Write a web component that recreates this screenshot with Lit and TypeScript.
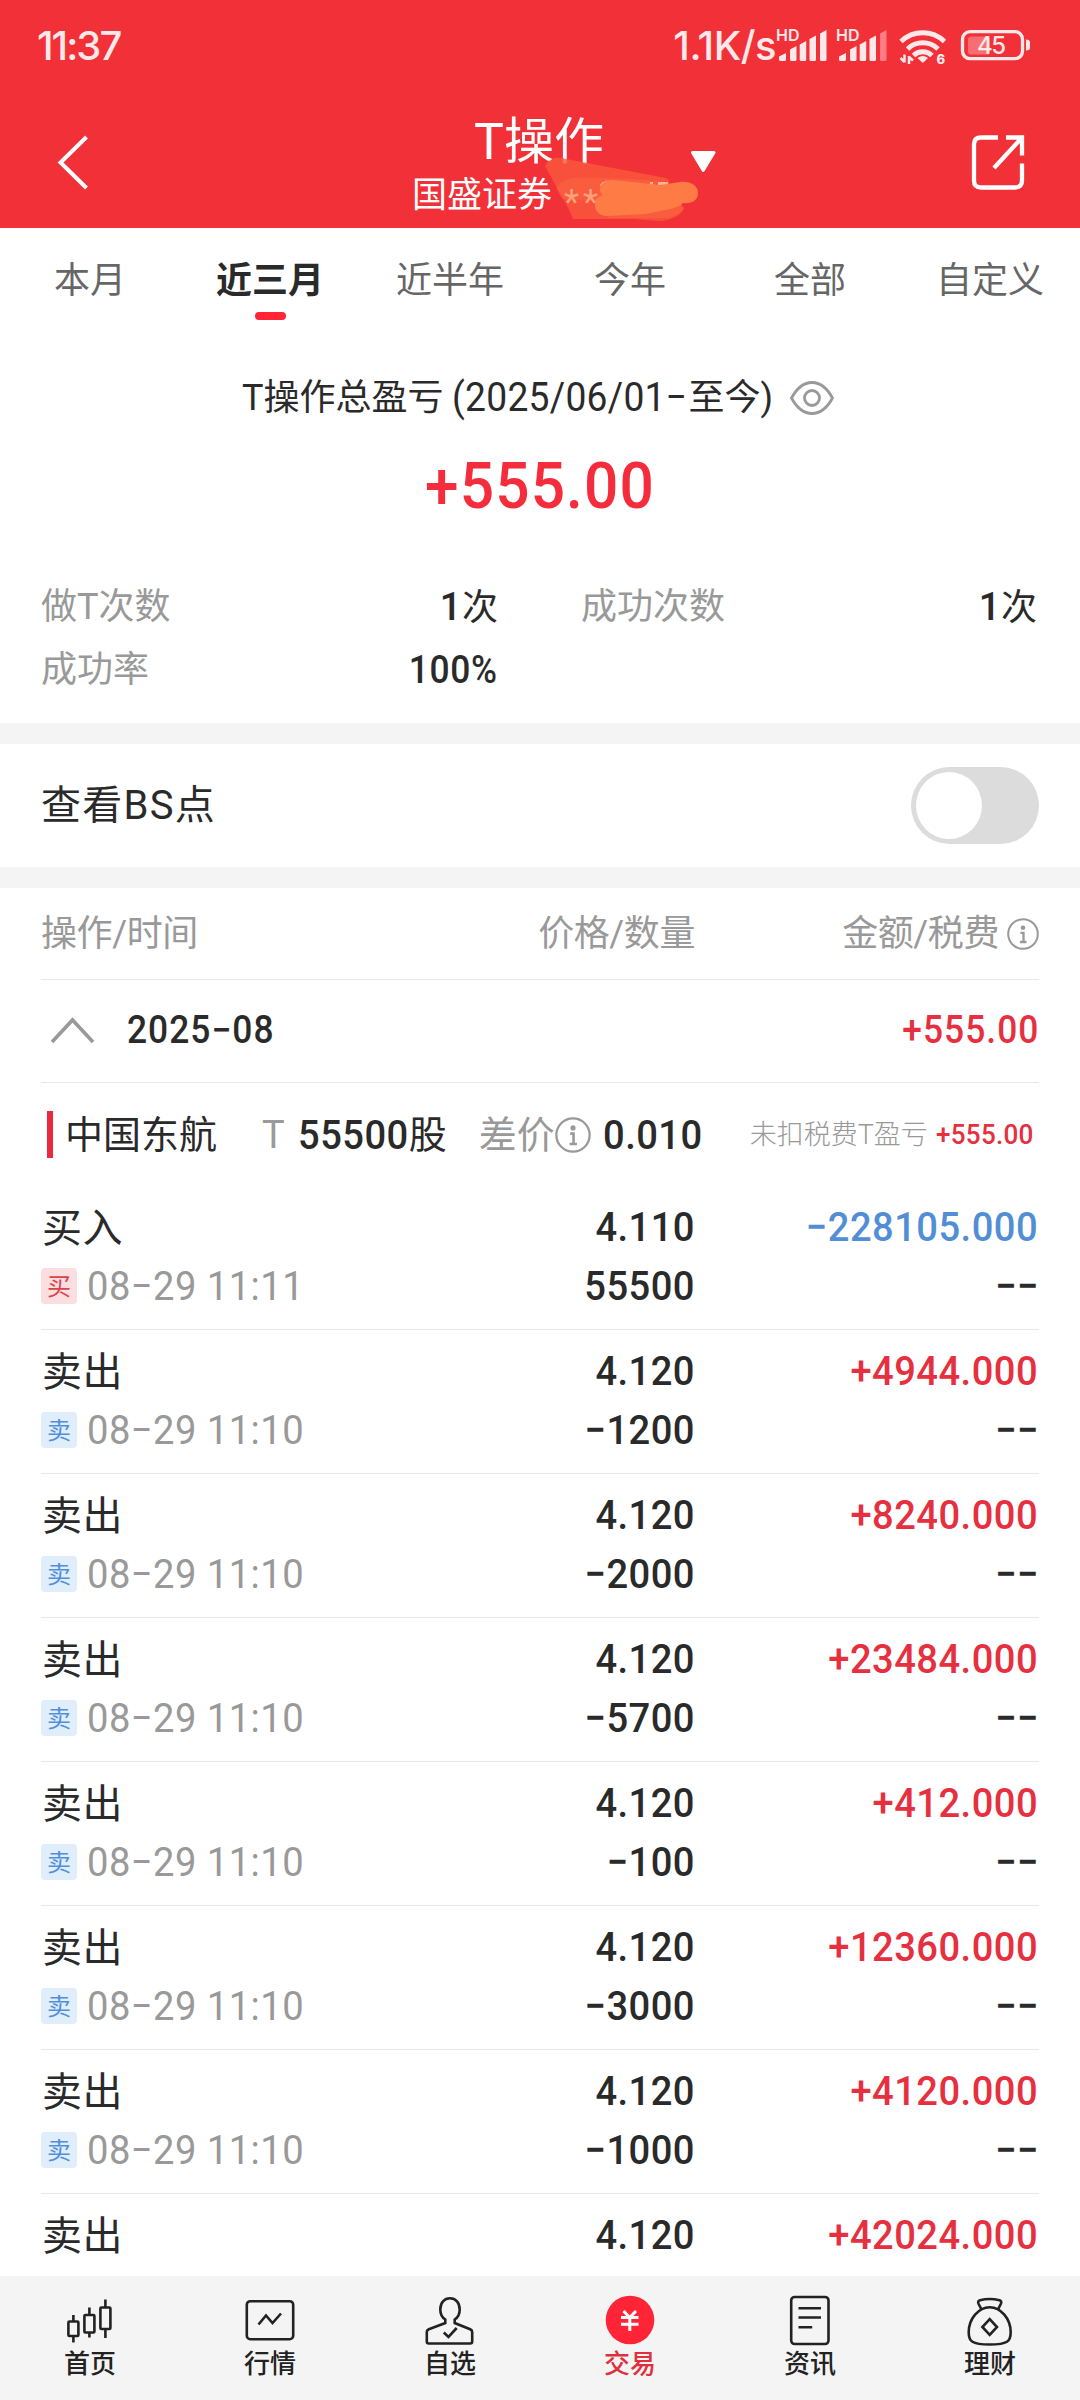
import { LitElement, html, svg, css, nothing } from "lit";
import { customElement, property } from "lit/decorators.js";
import { classMap } from "lit/directives/class-map.js";

interface Trade {
  side: "buy" | "sell";
  price: string;
  amount: string;
  time?: string;
  qty?: string;
}

const sell = (qty: string, amount: string): Trade => ({
  side: "sell",
  time: "08−29 11:10",
  price: "4.120",
  qty,
  amount,
});

const TRADES: Trade[] = [
  { side: "buy", time: "08−29 11:11", price: "4.110", qty: "55500", amount: "−228105.000" },
  sell("−1200", "+4944.000"),
  sell("−2000", "+8240.000"),
  sell("−5700", "+23484.000"),
  sell("−100", "+412.000"),
  sell("−3000", "+12360.000"),
  sell("−1000", "+4120.000"),
  { side: "sell", price: "4.120", amount: "+42024.000" },
];

const RANGES = ["本月", "近三月", "近半年", "今年", "全部", "自定义"];

const NAV = [
  {
    label: "首页",
    icon: svg`<g transform="translate(-.6 0)"><rect x="4" y="26.500" width="10" height="14.500" rx="1"/><rect x="20" y="20" width="10" height="17.500" rx="1"/><rect x="36" y="12.500" width="10" height="21.500" rx="1"/><path d="M9 20v6.500M9 41v6.500M25 12.500V20M25 37.500v5M41 4.500v8M41 34v9"/></g>`,
  },
  {
    label: "行情",
    icon: svg`<rect x="1.800" y="6.200" width="46.400" height="38" rx="3.500"/><path d="M13.500 29.500l7.500-9 6.500 7.500 8.500-9.500"/>`,
  },
  {
    label: "自选",
    icon: svg`<path d="M20.300 24.500v3.500L3.800 34.200Q1.800 35 1.800 37v9.500q0 2 2 2h41.400q2 0 2-2V37q0-2-2-2.800L29.700 28v-3.500C33 22.500 34.700 19 34.700 14.500c0-7-4-11.200-9.700-11.200s-9.700 4.200-9.700 11.200c0 4.500 1.700 8 5 10z"/><path d="M18.800 37.500l4.700 4.500 8.200-9"/>`,
  },
  {
    label: "交易",
    icon: svg`<circle class="coin" cx="25" cy="25" r="24.300"/><path class="yen" d="M18.500 16l6.200 6.500L31 16M16 22.500h17.500M16 29.200h17.500M24.800 22.500V36"/>`,
  },
  {
    label: "资讯",
    icon: svg`<rect x="6.200" y="2" width="37.300" height="47" rx="3.500"/><path d="M13.500 13.200H36M13.500 22.500H36M13.500 32.200h13.700"/>`,
  },
  {
    label: "理财",
    icon: svg`<path d="M16.500 14.500L13.400 8.500Q12.500 6 15 5.200q9.500-2.400 19.500 0Q37 6 36 8.500L33 14.500"/><path d="M24.700 12.200c-11 0-21 11.500-21 25 0 9 3 12.300 21 12.300s21-3.300 21-12.300c0-13.500-10-25-21-25z"/><path d="M24.700 24.200l7.300 7.800-7.300 7.800-7.300-7.800z"/>`,
  },
];

@customElement("info-icon")
class InfoIcon extends LitElement {
  @property({ type: Number }) size = 32;
  static styles = css`
    :host { display: block; flex: none; }
    svg { display: block; fill: none; stroke: #999; }
  `;
  render() {
    return html`<svg width=${this.size} height=${this.size} viewBox="0 0 32 32">
      <circle cx="16" cy="16" r="14.800" stroke-width="2"/>
      <circle cx="16" cy="9.700" r="2.300" fill="#999" stroke="none"/>
      <path d="M13.500 14.800h3v9M13 24h6.500" stroke-width="2.300"/>
    </svg>`;
  }
}

@customElement("status-bar")
class StatusBar extends LitElement {
  static styles = css`
    :host { display: flex; justify-content: space-between; height: 92px; padding: 0 48px 0 37px; color: #ffe8e9; font-family: Inter, sans-serif; font-weight: 500; font-size: 40px; line-height: 92px; }
    .clock { letter-spacing: -2px; }
    .right { display: flex; }
    .speed { letter-spacing: -0.500px; }
    svg { display: block; }
    .fill { fill: #ffe8e9; }
    .line { fill: none; stroke: #ffe8e9; }
    .dim { fill: #ff7d82; }
    .hd { font: 600 16px Inter, sans-serif; fill: #ffe8e9; }
    .six { font: 800 13px Inter, sans-serif; fill: #ffe8e9; }
    .pct { font: 500 24px Inter, sans-serif; fill: #ffe8e9; }
  `;
  private signal(x: number, weak: boolean) {
    return svg`<g transform="translate(${x} 0)">
      <text class="hd" x="-3" y="41">HD</text>
      <path class="fill" d="M0 56.500l7-3.500v6.500q0 1.500-1.500 1.500h-4Q0 61 0 59.500zM11 49.500l6.500-3.500v13.500q0 1.500-1.500 1.500h-3.500q-1.500 0-1.500-1.500zM20.700 44.500l6.500-3.500v18.500q0 1.500-1.500 1.500h-3.500q-1.500 0-1.500-1.500zM30.500 39l6.500-3.500v24q0 1.500-1.500 1.500H32q-1.500 0-1.500-1.500z"/>
      <path class=${weak ? "dim" : "fill"} d="M41 33.500l6.500-3.500v29.500q0 1.500-1.500 1.500h-3.500q-1.500 0-1.500-1.500z"/>
    </g>`;
  }
  render() {
    return html`<div class="clock">11:37</div>
      <div class="right">
        <div class="speed">1.1K/s</div>
        <svg width="256" height="92" viewBox="776 0 256 92">
          ${this.signal(779, false)}${this.signal(839, true)}
          <g class="line" stroke-width="5">
            <path d="M901 41.500a31.500 31.500 0 0 1 43.500 0"/>
            <path d="M907.500 49a22 22 0 0 1 30.500 0" />
            <path d="M913.500 55.500a13.500 13.500 0 0 1 18.500 0"/>
          </g>
          <path class="fill" d="M917.500 58q5.200-4 10.500 0l-5.200 5z"/>
          <path class="line" stroke-width="2.500" d="M904.500 54.500v8M900.500 58l4 4M909 64v-8M909 57l4 3.500"/>
          <text class="six" x="936.500" y="64">6</text>
          <rect class="line" x="962.500" y="31.700" width="60" height="27" rx="7.500" stroke-width="3.300"/>
          <rect x="968" y="36.500" width="22" height="18" rx="3" fill="#fff" fill-opacity=".3"/>
          <path class="fill" d="M1026 39.500q4 0 4 2.500v6q0 2.500-4 2.500z"/>
          <text class="pct" x="977" y="54" textLength="29">45</text>
        </svg>
      </div>`;
  }
}

@customElement("trade-row")
class TradeRow extends LitElement {
  @property({ attribute: false }) trade!: Trade;
  static styles = css`
    :host { display: grid; grid-template-columns: 290px 364px 1fr; grid-template-rows: 50px auto; row-gap: 9px; box-sizing: border-box; padding: 16px 0 18px; margin: 0 41px 1px; box-shadow: 0 1px #e8e8e8; font-size: 41px; line-height: 50px; letter-spacing: 0.500px; font-weight: 500; color: #2a2a2a; white-space: nowrap; }
    .action { font-size: 40px; font-weight: 400; padding: 2px 0 0 1px; height: 48px; }
    .num { text-align: right; transform: scaleX(0.93); transform-origin: right; }
    .amount { color: #e6303f; padding-right: 1px; }
    .amount.neg { color: #528ed6; }
    .meta { display: flex; align-items: center; gap: 10px; color: #999; font-weight: 400; }
    .time { transform: scaleX(0.93); transform-origin: left; }
    .tag { width: 36px; height: 36px; border-radius: 4px; background: #e0edfb; color: #4f8fdb; font-size: 24px; line-height: 38px; text-align: center; letter-spacing: 0; }
    .tag.buy { background: #fbdfe0; color: #d8434c; }
  `;
  render() {
    const t = this.trade;
    const buy = t.side === "buy";
    return html`<div class="action">${buy ? "买入" : "卖出"}</div>
      <div class="num">${t.price}</div>
      <div class=${classMap({ num: true, amount: true, neg: buy })}>${t.amount}</div>
      ${t.time
        ? html`<div class="meta"><span class=${classMap({ tag: true, buy })}>${buy ? "买" : "卖"}</span><span class="time">${t.time}</span></div>
            <div class="num">${t.qty}</div>
            <div class="num">−−</div>`
        : nothing}`;
  }
}

@customElement("app-root")
class AppRoot extends LitElement {
  static styles = css`
    :host { display: flex; flex-direction: column; width: 1080px; height: 2400px; overflow: hidden; background: #fff; color: #2a2a2a; font-family: Roboto, "Noto Sans CJK SC", sans-serif; white-space: nowrap; }
    svg { display: block; flex: none; }
    .top { background: #f23038; height: 228px; flex: none; color: #fff; }
    .titlebar { display: grid; grid-template-columns: 1fr 300px 1fr; height: 136px; }
    .side { display: flex; align-items: center; padding-top: 7px; height: 132px; box-sizing: border-box; }
    .side.end { justify-content: space-between; }
    .back { padding-left: 55px; }
    .share { padding-right: 53px; }
    .heading { position: relative; display: flex; flex-direction: column; align-items: center; padding-top: 19px; }
    .title { font-size: 50px; line-height: 62px; padding-right: 2px; }
    .broker { align-self: flex-start; display: flex; gap: 12px; padding-left: 22px; font-size: 35px; line-height: 46px; }
    .stars { position: relative; z-index: 1; color: #ffa17c; letter-spacing: 4px; padding-top: 7px; }
    .scribble { position: absolute; left: 153px; top: 62px; }

    .ranges { display: grid; grid-template-columns: repeat(6, 1fr); height: 100px; flex: none; }
    .range { display: flex; flex-direction: column; align-items: center; font-size: 36px; line-height: 50px; padding-top: 28px; color: #666; }
    .range.on { color: #2a2a2a; font-weight: 700; }
    .range.on::after { content: ""; width: 31px; height: 8px; border-radius: 4px; background: #ff2436; margin-top: 6px; }

    .narrow { display: inline-block; transform: scaleX(0.93); transform-origin: left; }
    .narrow.r { transform-origin: right; }
    .summary { height: 395px; flex: none; }
    .caption { display: flex; align-items: center; padding: 44px 0 0 242px; font-size: 36px; line-height: 52px; }
    .period { font-size: 40px; letter-spacing: 0.300px; margin: 0 -17px 0 9px; }
    .eye { margin-left: 17px; }
    .cjk { font-size: 36px; letter-spacing: 0; }
    .total { font-size: 65px; font-weight: 500; line-height: 80px; transform: scaleX(0.93); letter-spacing: 1.200px; text-align: center; color: #f42c3c; margin-top: 22px; }
    .stats { display: grid; grid-template-columns: 457px 456px; column-gap: 83px; padding: 50px 40px 0 41px; font-size: 36px; line-height: 62px; }
    .stat { display: flex; justify-content: space-between; }
    .label { color: #999; }
    .value { font-weight: 500; font-size: 38px; letter-spacing: 0.700px; }
    .value .cjk { font-weight: 400; }

    .band { height: 21px; flex: none; background: #f4f4f4; }
    .option { display: flex; justify-content: space-between; align-items: center; height: 123px; flex: none; padding: 0 41px; font-size: 40px; line-height: 50px; letter-spacing: 1.300px; }
    .switch { width: 128px; height: 77px; box-sizing: border-box; padding: 5px; border-radius: 39px; background: #dcdcdc; }
    .knob { width: 66px; height: 67px; border-radius: 50%; background: #fff; }

    .cols { display: grid; grid-template-columns: 290px 364px 1fr; align-items: center; height: 91px; flex: none; margin: 0 41px; font-size: 36px; line-height: 50px; letter-spacing: -0.400px; color: #999; }
    .cols span { padding-top: 1px; }
    .cols .mid { text-align: right; }
    .cols .last { display: flex; justify-content: flex-end; align-items: center; gap: 8px; }
    .rule { height: 1px; flex: none; background: #e8e8e8; margin: 0 41px; }
    .month { display: flex; align-items: center; height: 102px; flex: none; padding: 0 41px 2px 50px; box-sizing: border-box; font-size: 38px; font-weight: 500; letter-spacing: 1.100px; }
    .month .date { margin: 0 auto 0 32px; }
    .up { color: #e6303f; }
    .stock { display: flex; align-items: center; height: 103px; flex: none; padding-left: 47px; font-size: 38px; line-height: 50px; }
    .bar { width: 6px; height: 47px; background: #e8293f; margin-right: 12px; }
    .name { width: 197px; }
    .grey { color: #999; }
    .shares { display: flex; padding-left: 13px; width: 181px; font-size: 41px; font-weight: 500; letter-spacing: 0.500px; }
    .shares .narrow { margin-right: -8px; }
    .shares .cjk { font-size: 38px; font-weight: 400; }
    .diff { padding-left: 12px; width: 147px; font-size: 41px; font-weight: 500; letter-spacing: 0.500px; }
    .net { font-size: 27px; font-weight: 300; }
    .netval { margin-left: 8px; font-size: 28px; font-weight: 500; letter-spacing: 0.300px; }
    .trades { flex: 1; min-height: 0; overflow: hidden; }

    .nav { display: grid; grid-template-columns: repeat(6, 1fr); height: 124px; flex: none; background: #f4f4f4; }
    .item { display: flex; flex-direction: column; align-items: center; padding-top: 19px; font-size: 26px; line-height: 36px; font-weight: 500; color: #222; }
    .item svg { fill: none; stroke: #222; stroke-width: 2.600; overflow: visible; margin-bottom: -1px; }
    .item.on { color: #e0303f; }
    .coin { fill: #ff2436; stroke: none; }
    .yen { stroke: #fff; stroke-width: 3; }
  `;

  render() {
    return html`
      <div class="top">
        <status-bar></status-bar>
        <div class="titlebar">
          <div class="side back">
            <svg width="36" height="56" viewBox="0 0 36 56" fill="none" stroke="#fff" stroke-width="4"><path d="M31.500 3L5.500 28.500 31.500 54"/></svg>
          </div>
          <div class="heading">
            <div class="title">T操作</div>
            <div class="broker"><span>国盛证券</span><span class="stars">**</span></div>
            <svg class="scribble" width="160" height="72" viewBox="543 154 160 72">
              <path d="M545 166q2-5 9-8 6-1 12 1l100 19q5 2 2 8l16 22q-3 8-14 11-5 2-11 2l-24-2h-62q-3-8-7-15z" fill="#f9583c" fill-opacity=".82"/>
              <path d="M556 188q6-8 16-10 45-1 92 4l20 27q-6 6-15 9l-60 0-10-17-37-2z" fill="#fc6a42" fill-opacity=".45"/>
              <path d="M601 186q2-3 6-4M650 183.500h3M658 183.500h10" stroke="#ffb597" stroke-width="3" fill="none"/>
              <path d="M600 188q2-8 13-8l47 5 20-3c10-1 18 3 18 11s-7 11-15 10c-5 6-20 7-38 11l-38 2c-8 0-13-6-12-13 1-5 4-7 8-8q-4-3-3-7z" fill="#ff7b46"/>
            </svg>
          </div>
          <div class="side end">
            <svg width="27" height="24" viewBox="0 0 27 24"><path d="M2.500 2.500h21.500L13.200 20.500z" fill="#fff" stroke="#fff" stroke-width="3" stroke-linejoin="round"/></svg>
            <svg class="share" width="58" height="58" viewBox="0 0 58 58" fill="none" stroke="#fff" stroke-width="4.300"><path d="M29 4.500H12Q5 4.500 5 11.500v36q0 7 7 7h34q7 0 7-7V30.500M37 4.500h16v18M53 4.500L25 35"/></svg>
          </div>
        </div>
      </div>

      <div class="ranges">
        ${RANGES.map((r, i) => html`<div class=${classMap({ range: true, on: i === 1 })}>${r}</div>`)}
      </div>

      <div class="summary">
        <div class="caption">
          <span>T操作总盈亏</span>
          <span class="narrow period">(2025/06/01−</span><span>至今)</span>
          <svg class="eye" width="44" height="34" viewBox="0 0 44 34" fill="none" stroke="#999" stroke-width="2.800"><path d="M1.500 17Q10 1.500 22 1.500T42.500 17Q34 32.500 22 32.500T1.500 17z"/><circle cx="22" cy="17" r="7.500"/></svg>
        </div>
        <div class="total">+555.00</div>
        <div class="stats">
          <div class="stat"><span class="label">做T次数</span><span class="value">1<span class="cjk">次</span></span></div>
          <div class="stat"><span class="label">成功次数</span><span class="value">1<span class="cjk">次</span></span></div>
          <div class="stat"><span class="label">成功率</span><span class="value narrow r">100%</span></div>
        </div>
      </div>

      <div class="band"></div>
      <div class="option"><span>查看BS点</span><div class="switch"><div class="knob"></div></div></div>
      <div class="band"></div>

      <div class="cols">
        <span>操作/时间</span><span class="mid">价格/数量</span>
        <span class="last">金额/税费<info-icon .size=${32}></info-icon></span>
      </div>
      <div class="rule"></div>
      <div class="month">
        <svg width="45" height="28" viewBox="0 0 45 28" fill="none" stroke="#999" stroke-width="3.600"><path d="M2 26L22.500 4 43 26"/></svg>
        <span class="narrow date">2025−08</span><span class="narrow r up">+555.00</span>
      </div>
      <div class="rule"></div>
      <div class="stock">
        <div class="bar"></div>
        <span class="name">中国东航</span>
        <span class="grey">T</span>
        <span class="shares"><span class="narrow">55500</span><span class="cjk">股</span></span>
        <span class="grey">差价</span>
        <info-icon .size=${36}></info-icon>
        <span class="diff"><span class="narrow">0.010</span></span>
        <span class="net grey">未扣税费T盈亏</span>
        <span class="narrow netval up">+555.00</span>
      </div>
      <div class="trades">${TRADES.map((t) => html`<trade-row .trade=${t}></trade-row>`)}</div>

      <div class="nav">
        ${NAV.map((n, i) => html`<div class=${classMap({ item: true, on: i === 3 })}>
          <svg width="50" height="52" viewBox="0 0 50 52">${n.icon}</svg>${n.label}
        </div>`)}
      </div>
    `;
  }
}
